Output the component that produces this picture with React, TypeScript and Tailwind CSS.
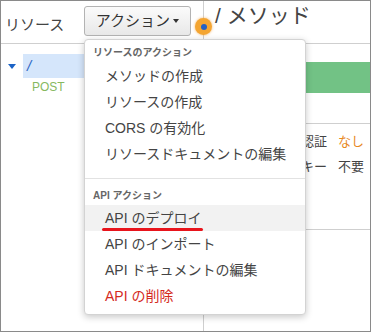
import React from 'react';

const resourceActions = ['メソッドの作成', 'リソースの作成', 'CORS の有効化', 'リソースドキュメントの編集'];

const ActionMenu = () => (
  <div className="absolute left-[83px] top-[38px] w-[222px] h-[276px] bg-white border border-[#d3d3d3] rounded-[4px] shadow-[0_2px_7px_rgba(0,0,0,0.22)] pt-[6px]">
    <div className="h-[14px] leading-[14px] pl-[8px] text-[10px] font-bold text-[#666] mb-[3px]">リソースのアクション</div>
    {resourceActions.map((a) => (
      <div key={a} className="h-[26px] leading-[26px] pl-[20px] text-[14px] text-[#444]">
        {a}
      </div>
    ))}
    <div className="mt-[11px] border-t border-[#e2e2e2]" />
    <div className="mt-[10px] h-[14px] leading-[14px] pl-[8px] text-[10px] font-bold text-[#666]">API アクション</div>
    <div className="mt-[2px]">
      <div className="relative h-[26px] leading-[26px] pl-[20px] text-[14px] text-[#444] bg-[#f2f2f2]">
        API のデプロイ
        {/* annotation underline */}
        <span className="absolute left-[17px] top-[23px] w-[101px] h-[3px] rounded-full bg-[#e8141c]" />
      </div>
      <div className="h-[26px] leading-[26px] pl-[20px] text-[14px] text-[#444]">API のインポート</div>
      <div className="h-[26px] leading-[26px] pl-[20px] text-[14px] text-[#444]">API ドキュメントの編集</div>
      <div className="h-[26px] leading-[26px] pl-[20px] text-[14px] text-[#d42a1e]">API の削除</div>
    </div>
  </div>
);

const App = () => {
  return (
    <div className="relative w-[371px] h-[332px] border border-[#8a8a8a] bg-white overflow-hidden flex flex-col font-['Liberation_Sans','Noto_Sans_CJK_JP',sans-serif]">
      {/* header */}
      <div className="flex h-[43px] shrink-0 border-b border-[#cfcfcf]">
        <div className="w-[203px] border-r border-[#cfcfcf] flex items-start pl-[4px]">
          <span className="w-[79px] pt-[14px] leading-[20px] text-[15px] text-[#444]">リソース</span>
          <button className="mt-[5px] w-[107px] h-[30px] flex items-center justify-center gap-[3px] rounded-[3px] border border-[#b3b3b3] bg-gradient-to-b from-[#fbfbfb] to-[#e8e8e8] text-[15px] text-[#333]">
            アクション
            <span className="w-0 h-0 border-l-[3.5px] border-r-[3.5px] border-t-[4px] border-l-transparent border-r-transparent border-t-[#333]" />
          </button>
        </div>
        <div className="flex-1 pl-[11px] pt-[1px]">
          <span className="leading-[28px] text-[21px] text-[#444]">/ メソッド</span>
        </div>
      </div>

      {/* body */}
      <div className="flex flex-1">
        <div className="w-[203px] border-r border-[#cfcfcf] pt-[10px]">
          <div className="flex items-center h-[24px] pl-[7px]">
            <span className="w-0 h-0 border-l-[4px] border-r-[4px] border-t-[5px] border-l-transparent border-r-transparent border-t-[#1b63c6]" />
            <div className="ml-[7px] flex-1 h-full bg-[#d5e6fb] pl-[4px] leading-[24px] text-[15px] italic text-[#2f66c4]">/</div>
          </div>
          <div className="mt-[2px] pl-[31px] leading-[14px] text-[12px] text-[#86b95f]">POST</div>
        </div>
        <div className="flex-1">
          <div className="mt-[18px] h-[31px] bg-[#72c285]" />
          <div className="h-[31px] border-b border-[#cfcfcf]" />
          <div className="h-[106px] border-b border-[#cfcfcf] pt-[8px] text-[13px] text-[#444]">
            <div className="flex h-[20px] leading-[20px]">
              <span className="w-[123px] text-right">認証</span>
              <span className="ml-[11px] text-[#e8891f]">なし</span>
            </div>
            <div className="mt-[5px] flex h-[20px] leading-[20px]">
              <span className="w-[123px] text-right">API キー</span>
              <span className="ml-[11px]">不要</span>
            </div>
          </div>
        </div>
      </div>

      {/* selection marker on the divider */}
      <div className="absolute left-[194px] top-[17px] w-[17px] h-[17px] rounded-full bg-[#f4a531] shadow-[0_0_3px_rgba(240,150,40,0.7)] flex items-center justify-center">
        <span className="w-[6px] h-[6px] rounded-full bg-[#2360c4]" />
      </div>

      <ActionMenu />
    </div>
  );
};

export default App;
